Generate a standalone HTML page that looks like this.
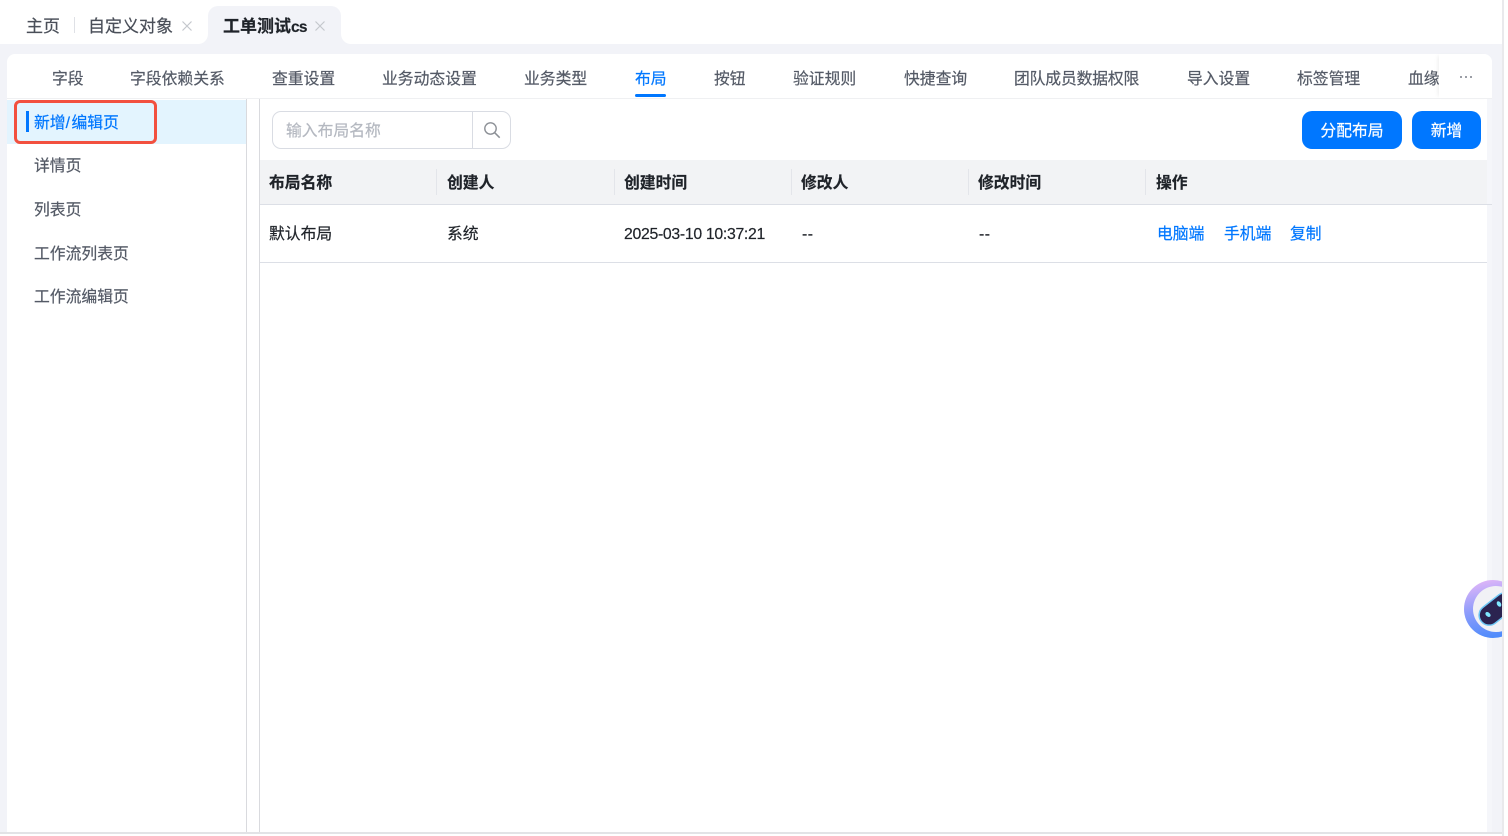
<!DOCTYPE html>
<html lang="zh-CN">
<head>
<meta charset="utf-8">
<title>布局</title>
<style>
html,body{margin:0;padding:0;width:1508px;height:836px;overflow:hidden;background:#fff}
body{position:relative;font-family:"Liberation Sans","Noto Sans CJK SC",sans-serif;font-size:15.8px;color:#1f2329}
.a{position:absolute;white-space:nowrap}
.t{position:absolute;white-space:nowrap;line-height:24px;height:24px;margin-top:2px;-webkit-text-stroke:.2px currentColor}
.nav{color:#545a66;top:66px}
.side{color:#545a66;left:34px}
.th{font-weight:700;color:#1f2329;top:170px}
.sep{position:absolute;top:169px;width:1px;height:26px;background:#e3e5ea}
.td{color:#1f2329;top:221px}
.lk{color:#0077ff;top:221px}
</style>
</head>
<body>
<!-- page background -->
<div class="a" style="left:0;top:44px;width:1502px;height:788px;background:#f2f3f8"></div>
<div class="a" style="left:0;top:832px;width:1502px;height:2px;background:#e2e3e6"></div>
<div class="a" style="left:1502px;top:0;width:2px;height:836px;background:#e9e9ec"></div>

<!-- top tabs -->
<div class="t" style="left:26px;top:13px;font-size:17px;color:#4a4f59">主页</div>
<div class="a" style="left:74px;top:17px;width:1px;height:16px;background:#dfe1e6"></div>
<div class="t" style="left:88px;top:13px;font-size:17px;color:#4a4f59">自定义对象</div>
<svg class="a" style="left:181px;top:20px" width="12" height="12" viewBox="0 0 12 12"><path d="M1.500 1.500l9 9M10.500 1.500l-9 9" stroke="#c4c7cd" stroke-width="1.200" fill="none"/></svg>
<div class="a" style="left:208px;top:6px;width:133px;height:38px;background:#f2f3f8;border-radius:10px 10px 0 0"></div>
<div class="a" style="left:198px;top:34px;width:10px;height:10px;background:#f2f3f8"></div>
<div class="a" style="left:198px;top:34px;width:10px;height:10px;background:#fff;border-radius:0 0 10px 0"></div>
<div class="a" style="left:341px;top:34px;width:10px;height:10px;background:#f2f3f8"></div>
<div class="a" style="left:341px;top:34px;width:10px;height:10px;background:#fff;border-radius:0 0 0 10px"></div>
<div class="t" style="left:223px;top:13px;font-size:17px;font-weight:700;color:#1f2329">工单测试<span style="letter-spacing:-.8px;font-size:15.5px">cs</span></div>
<svg class="a" style="left:314px;top:20px" width="12" height="12" viewBox="0 0 12 12"><path d="M1.500 1.500l9 9M10.500 1.500l-9 9" stroke="#c4c7cd" stroke-width="1.200" fill="none"/></svg>

<!-- card -->
<div class="a" style="left:7px;top:54px;width:1485px;height:778px;background:#fff;border-radius:8px 8px 0 0"></div>
<div class="a" style="left:1487px;top:99px;width:5px;height:733px;background:#f5f6fa"></div>

<!-- nav tabs -->
<div class="t nav" style="left:52px">字段</div>
<div class="t nav" style="left:130px">字段依赖关系</div>
<div class="t nav" style="left:272px">查重设置</div>
<div class="t nav" style="left:382px">业务动态设置</div>
<div class="t nav" style="left:524px">业务类型</div>
<div class="t nav" style="left:635px;color:#0077ff">布局</div>
<div class="a" style="left:635px;top:94px;width:31px;height:3px;border-radius:2px;background:#0077ff"></div>
<div class="t nav" style="left:714px">按钮</div>
<div class="t nav" style="left:793px">验证规则</div>
<div class="t nav" style="left:904px">快捷查询</div>
<div class="t nav" style="left:1014px;letter-spacing:-.15px">团队成员数据权限</div>
<div class="t nav" style="left:1187px">导入设置</div>
<div class="t nav" style="left:1297px">标签管理</div>
<div class="t nav" style="left:1408px;width:31px;overflow:hidden">血缘关系</div>
<div class="a" style="left:1439px;top:54px;width:53px;height:44px;background:#fff;border-radius:0 8px 0 0;box-shadow:-3px 0 4px -2px rgba(0,0,0,.07)"></div>
<div class="a" style="left:1460px;top:76px;width:2px;height:2px;border-radius:1px;background:#7b808a;box-shadow:5px 0 0 #7b808a,10px 0 0 #7b808a"></div>
<div class="a" style="left:7px;top:98px;width:1485px;height:1px;background:#eff0f2"></div>

<!-- sidebar -->
<div class="a" style="left:7px;top:100px;width:239px;height:44px;background:#e3f4fe"></div>
<div class="a" style="left:246px;top:99px;width:1px;height:733px;background:#d9dade"></div>
<div class="a" style="left:259px;top:99px;width:1px;height:733px;background:#d9dade"></div>
<div class="a" style="left:26px;top:111px;width:3px;height:21px;background:#0077ff"></div>
<div class="t side" style="top:110px;color:#0077ff">新增<span style="letter-spacing:1.500px">/</span>编辑页</div>
<div class="t side" style="top:153px">详情页</div>
<div class="t side" style="top:197px">列表页</div>
<div class="t side" style="top:241px">工作流列表页</div>
<div class="t side" style="top:284px">工作流编辑页</div>
<div class="a" style="left:14px;top:100px;width:143px;height:44px;box-sizing:border-box;border:3px solid #f2503f;border-radius:6px"></div>

<!-- search -->
<div class="a" style="left:272px;top:111px;width:239px;height:38px;box-sizing:border-box;border:1px solid #d9dce3;border-radius:9px;background:#fff"></div>
<div class="a" style="left:472px;top:112px;width:1px;height:36px;background:#d9dce3"></div>
<div class="t" style="left:286px;top:118px;color:#b4b8c0">输入布局名称</div>
<svg class="a" style="left:483px;top:121px" width="18" height="18" viewBox="0 0 18 18"><circle cx="7.500" cy="7.500" r="5.700" stroke="#8c9096" stroke-width="1.400" fill="none"/><path d="M11.700 11.700l5 5" stroke="#8c9096" stroke-width="1.500" fill="none"/></svg>

<!-- buttons -->
<div class="a" style="left:1302px;top:111px;width:100px;height:38px;border-radius:10px;background:#0077ff;color:#fff;text-align:center;line-height:42px;-webkit-text-stroke:.2px #fff">分配布局</div>
<div class="a" style="left:1412px;top:111px;width:69px;height:38px;border-radius:10px;background:#0077ff;color:#fff;text-align:center;line-height:42px;-webkit-text-stroke:.2px #fff">新增</div>

<!-- table -->
<div class="a" style="left:260px;top:160px;width:1227px;height:44px;background:#f2f3f5"></div>
<div class="a" style="left:260px;top:204px;width:1232px;height:1px;background:#dcdfe6"></div>
<div class="a" style="left:260px;top:262px;width:1227px;height:1px;background:#dcdfe6"></div>
<div class="t th" style="left:269px">布局名称</div>
<div class="sep" style="left:436px"></div>
<div class="t th" style="left:447px">创建人</div>
<div class="sep" style="left:614px"></div>
<div class="t th" style="left:624px">创建时间</div>
<div class="sep" style="left:791px"></div>
<div class="t th" style="left:801px">修改人</div>
<div class="sep" style="left:968px"></div>
<div class="t th" style="left:978px">修改时间</div>
<div class="sep" style="left:1145px"></div>
<div class="t th" style="left:1156px">操作</div>
<div class="t td" style="left:269px">默认布局</div>
<div class="t td" style="left:447px">系统</div>
<div class="t td" style="left:624px;letter-spacing:-.3px">2025-03-10 10:37:21</div>
<div class="t td" style="left:802px;letter-spacing:.5px">--</div>
<div class="t td" style="left:979px;letter-spacing:.5px">--</div>
<div class="t lk" style="left:1157px">电脑端</div>
<div class="t lk" style="left:1224px">手机端</div>
<div class="t lk" style="left:1290px">复制</div>

<!-- floating robot -->
<div class="a" style="left:1464px;top:580px;width:38px;height:58px;overflow:hidden">
<svg width="60" height="58" viewBox="0 0 60 58">
<defs>
<linearGradient id="g" x1="0.300" y1="0" x2="0.500" y2="1"><stop offset="0" stop-color="#e0b6f8"/><stop offset="0.500" stop-color="#8d9cfb"/><stop offset="1" stop-color="#4d8bfb"/></linearGradient>
</defs>
<circle cx="29" cy="29" r="29" fill="url(#g)"/>
<circle cx="32" cy="29" r="23" fill="#f1f1f5"/>
<rect x="13" y="19" width="40" height="20" rx="10" transform="rotate(-38 33 29)" fill="#2b2350" stroke="#6fc8f5" stroke-width="1.500"/>
<ellipse cx="24" cy="34.500" rx="2" ry="3" transform="rotate(-50 24 34.500)" fill="#7fe8ff"/>
<ellipse cx="35" cy="24" rx="2" ry="3" transform="rotate(-30 35 24)" fill="#7fe8ff"/>
</svg>
</div>
</body>
</html>
